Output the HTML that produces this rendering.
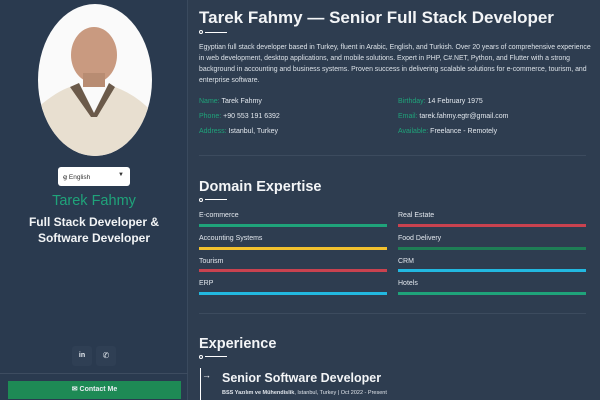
<!DOCTYPE html>
<html><head><meta charset="utf-8"><style>
*{margin:0;padding:0;box-sizing:border-box}
body{width:600px;height:400px;overflow:hidden;background:#2e3d50;font-family:"Liberation Sans",sans-serif;color:#e8edf2;position:relative}
.side{position:absolute;left:0;top:0;width:188px;height:400px;background:#2a3a4f;border-right:1px solid #3a4a5e}
.abs{position:absolute}
.g{color:#1fa37a}
.bar{position:absolute;height:3px;width:188px}
.lbl{position:absolute;font-size:7px;color:#e3e8ee}
.h{position:absolute;font-weight:bold;color:#f3f5f7}
.dot{position:absolute;width:4px;height:4px;border:1px solid #fff;border-radius:50%}
.ln{position:absolute;height:1px;width:22px;background:#fff}
</style></head><body>
<div class="side">
<svg class="abs" style="left:37px;top:3px" width="116" height="154">
<defs><clipPath id="c"><ellipse cx="58" cy="77" rx="57" ry="76"/></clipPath></defs>
<ellipse cx="58" cy="77" rx="57" ry="76" fill="#fafafa"/>
<g clip-path="url(#c)">
<path d="M0 105 Q20 88 33 84 L57 110 L78 84 Q100 92 116 110 L116 154 L0 154Z" fill="#e8dfd0"/>
<path d="M33 84 L42 80 L57 110 L72 80 L78 84 L60 114 L54 114Z" fill="#6b5a4a"/>
<ellipse cx="57" cy="52" rx="23" ry="28" fill="#c99a80"/>
<rect x="46" y="70" width="22" height="14" fill="#b88c72"/>
</g></svg>
<div class="abs" style="left:58px;top:167px;width:72px;height:19px;background:#fff;border-radius:3px;font-size:6.5px;color:#333;padding:6px 0 0 5px">ꞡ English<span style="position:absolute;right:6px;top:5px;font-size:6px">▼</span></div>
<div class="abs g" style="left:0;width:188px;top:193px;text-align:center;font-size:14.5px">Tarek Fahmy</div>
<div class="abs" style="left:0;width:188px;top:214px;text-align:center;font-size:12px;font-weight:bold;line-height:16px;color:#f2f4f6">Full Stack Developer &amp;<br>Software Developer</div>
<div class="abs" style="left:72px;top:346px;width:20px;height:20px;background:#2f3f54;border-radius:3px;font-size:7px;font-weight:bold;text-align:center;line-height:20px">in</div>
<div class="abs" style="left:96px;top:346px;width:20px;height:20px;background:#2f3f54;border-radius:3px;font-size:8px;text-align:center;line-height:20px">✆</div>
<div class="abs" style="left:0;top:373px;width:188px;height:1px;background:#3d4c60"></div>
<div class="abs" style="left:8px;top:381px;width:173px;height:18px;background:#1e8a55;font-size:7px;font-weight:bold;text-align:center;line-height:18px">✉ Contact Me</div>
</div>

<div class="h" style="left:199px;top:8px;font-size:17px">Tarek Fahmy — Senior Full Stack Developer</div>
<div class="dot" style="left:199px;top:30px"></div><div class="ln" style="left:205px;top:32px"></div>
<div class="abs" style="left:199px;top:42px;width:398px;font-size:6.9px;line-height:11px;color:#dce2e8">Egyptian full stack developer based in Turkey, fluent in Arabic, English, and Turkish. Over 20 years of comprehensive experience in web development, desktop applications, and mobile solutions. Expert in PHP, C#.NET, Python, and Flutter with a strong background in accounting and business systems. Proven success in delivering scalable solutions for e-commerce, tourism, and enterprise software.</div>
<div class="lbl" style="left:199px;top:98px"><span class="g">Name:</span> Tarek Fahmy</div>
<div class="lbl" style="left:199px;top:113px"><span class="g">Phone:</span> +90 553 191 6392</div>
<div class="lbl" style="left:199px;top:128px"><span class="g">Address:</span> Istanbul, Turkey</div>
<div class="lbl" style="left:398px;top:98px"><span class="g">Birthday:</span> 14 February 1975</div>
<div class="lbl" style="left:398px;top:113px"><span class="g">Email:</span> tarek.fahmy.egtr@gmail.com</div>
<div class="lbl" style="left:398px;top:128px"><span class="g">Available:</span> Freelance - Remotely</div>
<div class="abs" style="left:199px;top:155px;width:387px;height:1px;background:#3c4b5e"></div>

<div class="h" style="left:199px;top:179px;font-size:14.5px">Domain Expertise</div>
<div class="dot" style="left:199px;top:198px"></div><div class="ln" style="left:205px;top:199px"></div>
<div class="lbl" style="left:199px;top:212px">E-commerce</div><div class="bar" style="left:199px;top:224px;background:#1fa37a"></div>
<div class="lbl" style="left:398px;top:212px">Real Estate</div><div class="bar" style="left:398px;top:224px;background:#c9424f"></div>
<div class="lbl" style="left:199px;top:235px">Accounting Systems</div><div class="bar" style="left:199px;top:247px;background:#f2c12e"></div>
<div class="lbl" style="left:398px;top:235px">Food Delivery</div><div class="bar" style="left:398px;top:247px;background:#1e7e55"></div>
<div class="lbl" style="left:199px;top:258px">Tourism</div><div class="bar" style="left:199px;top:269px;background:#c9424f"></div>
<div class="lbl" style="left:398px;top:258px">CRM</div><div class="bar" style="left:398px;top:269px;background:#22b8e0"></div>
<div class="lbl" style="left:199px;top:280px">ERP</div><div class="bar" style="left:199px;top:292px;background:#22b8e0"></div>
<div class="lbl" style="left:398px;top:280px">Hotels</div><div class="bar" style="left:398px;top:292px;background:#1fa37a"></div>
<div class="abs" style="left:199px;top:313px;width:387px;height:1px;background:#3c4b5e"></div>

<div class="h" style="left:199px;top:336px;font-size:14.5px">Experience</div>
<div class="dot" style="left:199px;top:355px"></div><div class="ln" style="left:205px;top:356px"></div>
<div class="abs" style="left:200px;top:368px;width:1px;height:32px;background:#fff"></div>
<div class="abs" style="left:202px;top:370px;font-size:9px;color:#fff">→</div>
<div class="h" style="left:222px;top:371px;font-size:12.5px">Senior Software Developer</div>
<div class="abs" style="left:222px;top:390px;font-size:5.5px;color:#dfe4ea"><b>BSS Yazılım ve Mühendislik</b>, Istanbul, Turkey | Oct 2022 - Present</div>
</body></html>
